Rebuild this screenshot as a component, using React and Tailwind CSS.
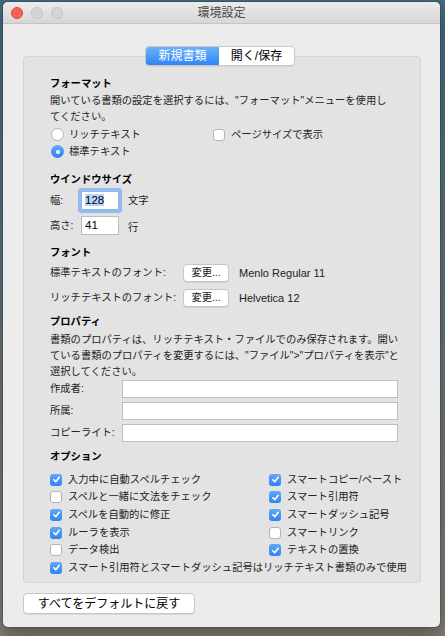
import React from 'react';

const Check = ({ checked }) => (
  <span
    className={
      checked
        ? 'flex h-[12px] w-[12px] shrink-0 items-center justify-center rounded-[3px] bg-gradient-to-b from-[#63a8f8] to-[#2f83f4]'
        : 'h-[12px] w-[12px] shrink-0 rounded-[3px] border border-[#b4b4b4] bg-white'
    }
  >
    {checked && (
      <svg width="9" height="9" viewBox="0 0 10 10">
        <path d="M2 5.3 L4.2 7.4 L8 2.6" fill="none" stroke="#fff" strokeWidth="1.8" strokeLinecap="round" strokeLinejoin="round" />
      </svg>
    )}
  </span>
);

const Radio = ({ on }) =>
  on ? (
    <span className="flex h-[13px] w-[13px] shrink-0 items-center justify-center rounded-full bg-gradient-to-b from-[#63a8f8] to-[#2f83f4]">
      <span className="h-[4px] w-[4px] rounded-full bg-white" />
    </span>
  ) : (
    <span className="h-[13px] w-[13px] shrink-0 rounded-full border border-[#b4b4b4] bg-white" />
  );

const CheckRow = ({ checked, label }) => (
  <div className="flex h-[17.6px] items-center gap-[6px] whitespace-nowrap">
    <Check checked={checked} />
    <span>{label}</span>
  </div>
);

const Button = ({ children, className = '' }) => (
  <div
    className={`flex items-center justify-center whitespace-nowrap rounded-[4px] border border-[#c6c6c6] bg-white shadow-[0_1px_0_rgba(0,0,0,0.08)] ${className}`}
  >
    {children}
  </div>
);

const Header = ({ children, className = '' }) => (
  <div className={`font-bold text-black ${className}`}>{children}</div>
);

const Field = ({ label, className = '' }) => (
  <div className={`flex h-[18px] items-center ${className}`}>
    <span className="w-[72px] whitespace-nowrap">{label}</span>
    <div className="h-[18px] w-[276px] shrink-0 border border-[#bdbdbd] bg-white" />
  </div>
);

const leftOptions = [
  [true, '入力中に自動スペルチェック'],
  [false, 'スペルと一緒に文法をチェック'],
  [true, 'スペルを自動的に修正'],
  [true, 'ルーラを表示'],
  [false, 'データ検出'],
];

const rightOptions = [
  [true, 'スマートコピー/ペースト'],
  [true, 'スマート引用符'],
  [true, 'スマートダッシュ記号'],
  [false, 'スマートリンク'],
  [true, 'テキストの置換'],
];

export default function App() {
  return (
    <div className="h-[636px] w-[445px] overflow-hidden bg-gradient-to-b from-[#416c7e] via-[#64727a] to-[#827d73] pl-[3px] pt-[2px] font-['Liberation_Sans','Noto_Sans_CJK_JP',sans-serif] text-[10.3px] leading-[16px] text-[#222]">
      <div className="flex h-[625px] w-[437px] flex-col overflow-hidden rounded-[5px] bg-[#ececec] shadow-[0_0_0_1px_rgba(0,0,0,0.15),0_8px_20px_rgba(0,0,0,0.35)]">
        {/* title bar */}
        <div className="relative flex h-[22px] shrink-0 items-center justify-center border-b border-[#c4c4c4] bg-gradient-to-b from-[#ececec] to-[#d6d6d6]">
          <div className="absolute left-[8px] top-[5px] flex gap-[8px]">
            <span className="h-[12px] w-[12px] rounded-full border border-[#d9463f] bg-[#fc5f57]" />
            <span className="h-[12px] w-[12px] rounded-full border border-[#c4c4c4] bg-[#d5d5d5]" />
            <span className="h-[12px] w-[12px] rounded-full border border-[#c4c4c4] bg-[#d5d5d5]" />
          </div>
          <span className="text-[12px] text-[#4a4a4a]">環境設定</span>
        </div>

        <div className="flex flex-1 flex-col px-[20px] pt-[22px]">
          {/* tabs */}
          <div className="relative z-10 flex justify-center pr-[3px]">
            <div className="flex h-[20px] overflow-hidden rounded-[4px] border border-[#c8c8c8] bg-white text-[12px] shadow-[0_1px_0_rgba(0,0,0,0.06)]">
              <div className="flex w-[73px] items-center justify-center bg-gradient-to-b from-[#6ab2fa] to-[#2c86f5] text-white">
                新規書類
              </div>
              <div className="flex w-[75px] items-center justify-center text-black">開く/保存</div>
            </div>
          </div>

          {/* group box */}
          <div className="-mt-[10px] h-[527px] w-[398px] rounded-[4px] border border-[#d4d4d4] bg-[#e3e3e3] pl-[26px] pt-[19px]">
            <Header>フォーマット</Header>
            <p className="mt-[1px] whitespace-nowrap">
              開いている書類の設定を選択するには、"フォーマット"メニューを使用し
              <br />
              てください。
            </p>
            <div className="mt-[1px] flex h-[17px] items-center whitespace-nowrap">
              <div className="flex w-[163px] items-center gap-[5px] pl-[1px]">
                <Radio />
                <span>リッチテキスト</span>
              </div>
              <div className="flex items-center gap-[6px]">
                <Check />
                <span>ページサイズで表示</span>
              </div>
            </div>
            <div className="flex h-[17px] items-center gap-[5px] pl-[1px]">
              <Radio on />
              <span>標準テキスト</span>
            </div>

            <Header className="mt-[12px]">ウインドウサイズ</Header>
            <div className="mt-[3px] flex h-[19px] items-center">
              <span className="w-[31px]">幅:</span>
              <div className="h-[19px] w-[38px] rounded-[1px] border border-[#8fb5ea] bg-white pl-[3px] text-[11.5px] leading-[17px] text-black shadow-[0_0_0_3px_#93bbf0]">
                <span className="bg-[#b5d5fd]">128</span>
              </div>
              <span className="ml-[9px]">文字</span>
            </div>
            <div className="mt-[6px] flex h-[19px] items-center">
              <span className="w-[31px]">高さ:</span>
              <div className="h-[19px] w-[38px] border border-[#bdbdbd] bg-white pl-[3px] text-[11.5px] leading-[17px] text-black">
                41
              </div>
              <span className="ml-[9px] mt-[5px]">行</span>
            </div>

            <Header className="mt-[10px]">フォント</Header>
            <div className="mt-[3px] flex h-[18px] items-center whitespace-nowrap">
              <span className="w-[133px]">標準テキストのフォント:</span>
              <Button className="h-[18px] w-[46px]">変更...</Button>
              <span className="ml-[10px] text-[11px]">Menlo Regular 11</span>
            </div>
            <div className="mt-[7px] flex h-[18px] items-center whitespace-nowrap">
              <span className="w-[133px]">リッチテキストのフォント:</span>
              <Button className="h-[18px] w-[46px]">変更...</Button>
              <span className="ml-[10px] text-[11px]">Helvetica 12</span>
            </div>

            <Header className="mt-[7px]">プロパティ</Header>
            <p className="mt-[2px] whitespace-nowrap">
              書類のプロパティは、リッチテキスト・ファイルでのみ保存されます。開い
              <br />
              ている書類のプロパティを変更するには、"ファイル"&gt;"プロパティを表示"と
              <br />
              選択してください。
            </p>
            <Field label="作成者:" />
            <Field label="所属:" className="mt-[4px]" />
            <Field label="コピーライト:" className="mt-[4px]" />

            <Header className="mt-[7px]">オプション</Header>
            <div className="mt-[6px] grid grid-cols-[219px_1fr]">
              {leftOptions.map(([c, l], i) => (
                <React.Fragment key={l}>
                  <CheckRow checked={c} label={l} />
                  <CheckRow checked={rightOptions[i][0]} label={rightOptions[i][1]} />
                </React.Fragment>
              ))}
              <div className="col-span-2">
                <CheckRow checked label="スマート引用符とスマートダッシュ記号はリッチテキスト書類のみで使用" />
              </div>
            </div>
          </div>

          <Button className="mt-[10px] h-[21px] w-[172px] text-[12px] text-black">すべてをデフォルトに戻す</Button>
        </div>
      </div>
    </div>
  );
}
